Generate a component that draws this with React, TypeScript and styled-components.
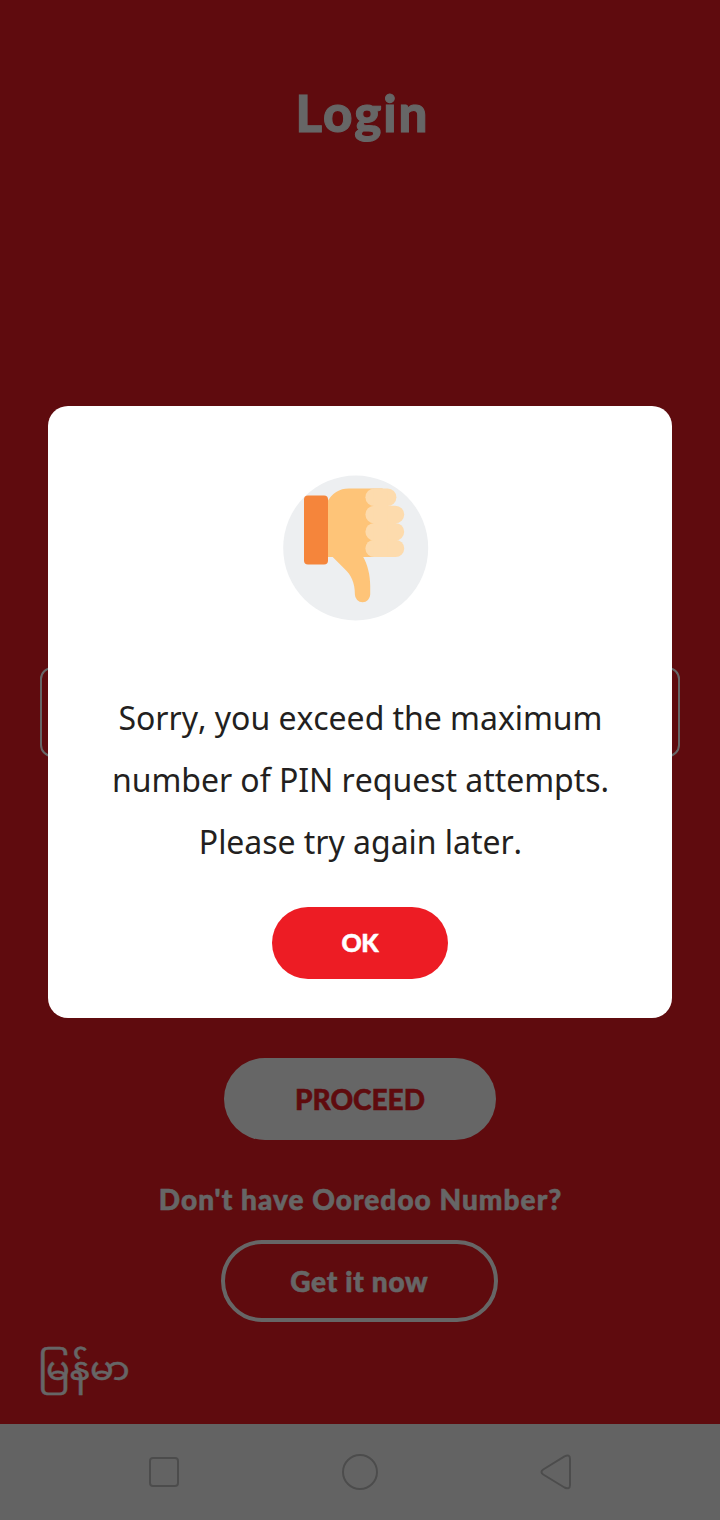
import React from "react";
import styled, { createGlobalStyle } from "styled-components";

const GlobalStyle = createGlobalStyle`
  * { box-sizing: border-box; }
  body { margin: 0; background: #ed1c24; }
  button { font: inherit; cursor: pointer; }
`;

const rounded = `"Lato", "Open Sans", sans-serif`;

const Screen = styled.div`
  position: relative;
  display: flex;
  flex-direction: column;
  width: 720px;
  height: 1520px;
  overflow: hidden;
  background: #ed1c24;
`;

const Page = styled.main`
  flex: 1;
  display: flex;
  flex-direction: column;
  align-items: center;
  padding: 81px 40px 0;
`;

const Label = styled.span<{ $size: number; $spacing?: number; $stroke?: number }>`
  font-family: ${rounded};
  font-size: ${(p) => p.$size}px;
  font-weight: 900;
  letter-spacing: ${(p) => p.$spacing ?? 0}px;
  margin-right: ${(p) => -(p.$spacing ?? 0)}px;
  -webkit-text-stroke: ${(p) => p.$stroke ?? 0.5}px currentColor;
  stroke-linejoin: round;
  white-space: nowrap;
`;

const Title = styled.h1`
  margin: 0 0 0 3px;
  height: 64px;
  line-height: 64px;
  color: #fff;
`;

const NumberField = styled.input`
  width: 100%;
  height: 90px;
  margin-top: 522px;
  border: 2px solid #fff;
  border-radius: 12px;
  background: transparent;
`;

const ProceedButton = styled.button`
  width: 272px;
  height: 82px;
  margin-top: 301px;
  border: 0;
  border-radius: 41px;
  background: #fff;
  color: #ed1c24;
`;

const Question = styled.p`
  margin: 39px 0 0;
  height: 40px;
  line-height: 40px;
  color: #fff;
`;

const OutlineButton = styled.button`
  width: 277px;
  height: 82px;
  margin: 21px 2px 0 0;
  border: 4px solid #fff;
  border-radius: 41px;
  background: transparent;
  color: #fff;
`;

const Language = styled.a`
  align-self: flex-start;
  height: 60px;
  margin: 21px 0 0 -2px;
  font: 400 32px/60px "Noto Sans Myanmar", "Noto Sans", sans-serif;
  -webkit-text-stroke: 0.4px currentColor;
  transform: scaleX(1.1);
  transform-origin: left;
  color: #fff;
`;

const NavBar = styled.nav`
  display: flex;
  justify-content: space-between;
  align-items: center;
  height: 96px;
  padding: 0 144px;
  background: #f8f8f8;

  svg {
    fill: none;
    stroke: #bebebe;
    stroke-width: 2;
    stroke-linejoin: round;
  }
`;

const Backdrop = styled.div`
  position: absolute;
  inset: 0;
  display: flex;
  align-items: center;
  justify-content: center;
  padding-bottom: 96px;
  background: rgba(0, 0, 0, 0.6);
`;

const Dialog = styled.section`
  display: flex;
  flex-direction: column;
  align-items: center;
  width: 624px;
  height: 612px;
  padding-top: 69px;
  border-radius: 20px;
  background: #fff;
`;

const ThumbIcon = styled.svg`
  flex: none;
  width: 146px;
  height: 146px;
  margin-right: 9px;
`;

const Message = styled.p`
  margin: 66px 0 0 1px;
  font: 400 32px/62px "Noto Sans", sans-serif;
  font-kerning: none;
  letter-spacing: -0.04px;
  text-align: center;
  color: #231f20;
`;

const OkButton = styled.button`
  width: 176px;
  height: 72px;
  margin-top: 34px;
  padding-bottom: 3px;
  border: 0;
  border-radius: 36px;
  background: #ed1c24;
  color: #fff;
`;

function ThumbsDown() {
  return (
    <ThumbIcon viewBox="0.3 0 146 146" aria-label="Thumbs down">
      <circle cx="73" cy="73" r="72.5" fill="#edeff1" />
      <path
        d="M44 28C49 18 57 13.500 66 13.500H100V82H80.500C85 90 87.500 100 87.500 111V119.500A7.600 7.600 0 0 1 72.200 119.500C72.200 107 68 99.500 62 94L50 82H44Z"
        fill="#fec478"
      />
      <rect x="21.300" y="20.500" width="24" height="69" rx="4" fill="#f5853b" />
      <g fill="#fddbad">
        <rect x="82.700" y="13.500" width="31" height="17.600" rx="8.800" />
        <rect x="82.700" y="30.700" width="38.800" height="17.600" rx="8.800" />
        <rect x="82.700" y="48" width="38.800" height="17.600" rx="8.800" />
        <rect x="82.700" y="64.700" width="38.800" height="17.300" rx="8.600" />
        <path d="M91 14H105V82H91Z" />
      </g>
    </ThumbIcon>
  );
}

export default function App() {
  return (
    <Screen>
      <GlobalStyle />
      <Page>
        <Title><Label $size={51} $spacing={2} $stroke={1}>Login</Label></Title>
        <NumberField aria-label="Number" />
        <ProceedButton><Label $size={28}>PROCEED</Label></ProceedButton>
        <Question><Label $size={28} $spacing={1.05}>Don't have Ooredoo Number?</Label></Question>
        <OutlineButton><Label $size={28} $spacing={0.7}>Get it now</Label></OutlineButton>
        <Language>မြန်မာ</Language>
      </Page>
      <NavBar>
        <svg width="40" height="40"><rect x="6" y="6" width="28" height="28" rx="3" /></svg>
        <svg width="40" height="40"><circle cx="20" cy="20" r="17" /></svg>
        <svg width="40" height="40"><path d="M7.200 17.500L28.500 4.300Q34 1.800 34 7V33Q34 38 28.500 35.500L7.200 22.500Q3.700 20 7.200 17.500Z" /></svg>
      </NavBar>
      <Backdrop>
        <Dialog role="dialog">
          <ThumbsDown />
          <Message>
            Sorry, you exceed the maximum<br />
            number of PIN request attempts.<br />
            Please try again later.
          </Message>
          <OkButton><Label $size={25} $spacing={-0.5}>OK</Label></OkButton>
        </Dialog>
      </Backdrop>
    </Screen>
  );
}
